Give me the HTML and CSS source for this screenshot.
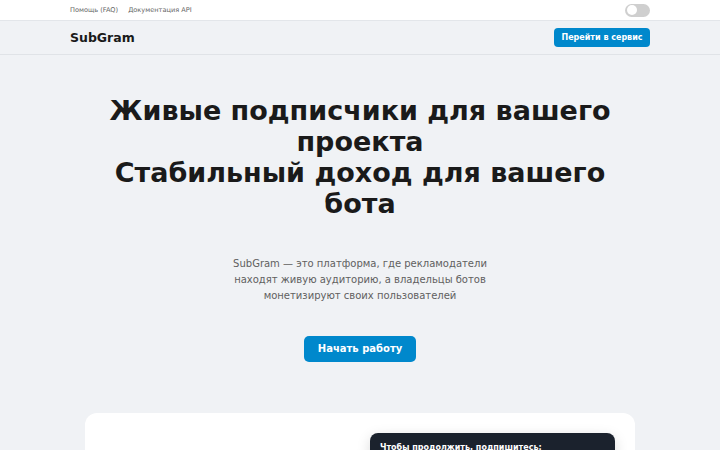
FILE: index.html
```html
<!DOCTYPE html>
<html lang="ru">
  <head>
    <meta charset="utf-8">
    <title>SubGram</title>
    <link rel="stylesheet" href="styles.css">
  </head>
  <body>

    <div class="topbar">
      <div class="wrap topbar-row">
        <nav class="top-links">
          <a href="#">Помощь (FAQ)</a>
          <a href="#">Документация API</a>
        </nav>
        <label class="switch"><span class="knob"></span></label>
      </div>
    </div>

    <header class="site-header">
      <div class="wrap header-row">
        <b class="logo">SubGram</b>
        <a href="#" class="btn btn-small">Перейти в сервис</a>
      </div>
    </header>

    <section class="hero">
      <h1>Живые подписчики для вашего проекта<br>Стабильный доход для вашего бота</h1>
      <p>SubGram — это платформа, где рекламодатели находят живую аудиторию, а владельцы ботов монетизируют своих пользователей</p>
      <a href="#" class="btn btn-big">Начать работу</a>
    </section>

    <section class="demo">
      <div class="demo-text"></div>
      <div class="bot-card">
        <b>Чтобы продолжить, подпишитесь:</b>
      </div>
    </section>

  </body>
</html>
```

FILE: styles.css
```css
* { box-sizing: border-box; }
body {
  margin: 0;
  background-color: #f0f2f5;
  font-family: 'DejaVu Sans', sans-serif;
  color: #1a1a1a;
}
a {
  text-decoration: none;
}
.wrap {
  max-width: 580px;
  margin: 0 auto;
}

.topbar {
  background-color: #fff;
  border-bottom: 1px solid #e3e6ea;
  height: 21px;
}
.topbar-row {
  display: flex;
  justify-content: space-between;
  align-items: center;
  height: 100%;
}
.top-links {
  display: flex;
  gap: 10px;
}
.top-links a {
  font-size: 6.6px;
  color: #666;
}
.switch {
  width: 25px;
  height: 13px;
  border-radius: 7px;
  background-color: #cfcfcf;
  padding: 1.5px;
  display: flex;
}
.knob {
  width: 10px;
  height: 10px;
  border-radius: 50%;
  background-color: #fff;
}

.site-header {
  height: 34px;
  border-bottom: 1px solid #e0e3e7;
}
.header-row {
  display: flex;
  justify-content: space-between;
  align-items: center;
  height: 100%;
}
.logo {
  font-size: 12.5px;
}
.btn {
  display: inline-block;
  background-color: #0088cc;
  color: #fff;
  font-weight: bold;
  text-align: center;
}
.btn-small {
  font-size: 8px;
  line-height: 19px;
  width: 96px;
  border-radius: 4px;
}
.btn-big {
  font-size: 10px;
  line-height: 26px;
  width: 112px;
  border-radius: 5px;
}

.hero {
  text-align: center;
  padding-top: 40px;
  padding-bottom: 51px;
}
.hero h1 {
  font-size: 27px;
  line-height: 31px;
  margin: 0 auto;
  max-width: 540px;
}
.hero p {
  font-size: 10px;
  line-height: 16px;
  color: #606060;
  max-width: 262px;
  margin: 37px auto 32px;
}

.demo {
  width: 550px;
  margin: 0 auto;
  background-color: #fff;
  border-radius: 12px;
  padding: 20px;
  display: grid;
  grid-template-columns: 1fr 1fr;
  gap: 20px;
}
.bot-card {
  background-color: #1b222d;
  border-radius: 8px;
  color: #fff;
  font-size: 8px;
  padding: 10px;
  height: 120px;
  box-shadow: 0 4px 14px rgba(0,0,0,0.15);
}
```
